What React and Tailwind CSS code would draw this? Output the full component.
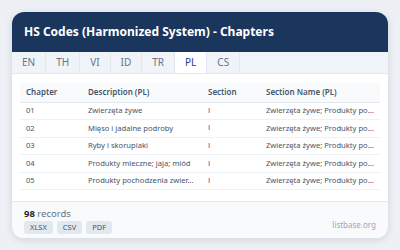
import React from "react";

const rows = [
  ["01", "Zwierzęta żywe"],
  ["02", "Mięso i jadalne podroby"],
  ["03", "Ryby i skorupiaki"],
  ["04", "Produkty mleczne; jaja; miód"],
  ["05", "Produkty pochodzenia zwier..."],
];

const tabs = ["EN", "TH", "VI", "ID", "TR", "PL", "CS"];

export default function App() {
  return (
    <div
      className="w-[400px] h-[250px] bg-[#edf0f5] p-[12px] overflow-hidden"
      style={{ fontFamily: '"Noto Sans", "Open Sans", sans-serif' }}
    >
      <div className="w-[376px] h-[226px] bg-white rounded-[12px] overflow-hidden shadow-[0_2px_8px_rgba(15,23,42,0.12)] flex flex-col">
        <div className="h-[40px] bg-[#1b365d] flex items-center px-[12px]">
          <h1 className="text-white font-bold text-[12px] leading-none">
            HS Codes (Harmonized System) - Chapters
          </h1>
        </div>
        <div className="h-[22px] bg-[#f0f3f8] flex border-b border-[#e2e8f0]">
          {tabs.map((t) => (
            <div
              key={t}
              className={
                t === "PL"
                  ? "px-[10px] flex items-center text-[10px] text-[#1e3a8a] bg-white border-r border-[#e2e8f0]"
                  : "px-[10px] flex items-center text-[10px] text-[#64748b] border-r border-[#e2e8f0]"
              }
            >
              {t}
            </div>
          ))}
        </div>
        <div className="flex-1 px-[8px] pt-[8px]">
          <table className="w-[360px] table-fixed border-collapse text-[7.6px]">
            <colgroup>
              <col className="w-[62px]" />
              <col className="w-[120px]" />
              <col className="w-[58px]" />
              <col className="w-[120px]" />
            </colgroup>
            <thead>
              <tr className="bg-[#f8fafc] h-[20px] border-b border-[#e2e8f0]">
                <th className="text-left font-semibold text-[8px] text-[#475569] px-[6px]">Chapter</th>
                <th className="text-left font-semibold text-[8px] text-[#475569] px-[6px]">Description (PL)</th>
                <th className="text-left font-semibold text-[8px] text-[#475569] px-[6px]">Section</th>
                <th className="text-left font-semibold text-[8px] text-[#475569] px-[6px]">Section Name (PL)</th>
              </tr>
            </thead>
            <tbody>
              {rows.map(([c, d]) => (
                <tr key={c} className="h-[17.6px] border-b border-[#eef2f6]">
                  <td className="px-[6px] text-[#475569]">{c}</td>
                  <td className="px-[6px] text-[#475569] whitespace-nowrap">{d}</td>
                  <td
                    className="px-[6px] text-[#7e3f7e] text-[8px]"
                    style={{ fontFamily: '"Liberation Sans", sans-serif' }}
                  >
                    I
                  </td>
                  <td className="px-[6px] text-[#475569] whitespace-nowrap">Zwierzęta żywe; Produkty po...</td>
                </tr>
              ))}
            </tbody>
          </table>
        </div>
        <div className="h-[37px] bg-[#f8fafc] border-t border-[#e2e8f0] px-[12px] pt-[5px] flex justify-between">
          <div className="flex flex-col gap-[1px]">
            <div className="text-[9.5px] leading-[13px] text-[#64748b]">
              <span className="font-bold text-[#1e293b]">98</span> records
            </div>
            <div className="flex gap-[4px]">
              {["XLSX", "CSV", "PDF"].map((b) => (
                <span
                  key={b}
                  className="h-[13px] px-[6px] bg-[#e2e8f0] rounded-[3px] text-[7.5px] text-[#475569] flex items-center"
                >
                  {b}
                </span>
              ))}
            </div>
          </div>
          <div className="self-center text-[8px] text-[#a3a3b8] pt-[4px]">listbase.org</div>
        </div>
      </div>
    </div>
  );
}
